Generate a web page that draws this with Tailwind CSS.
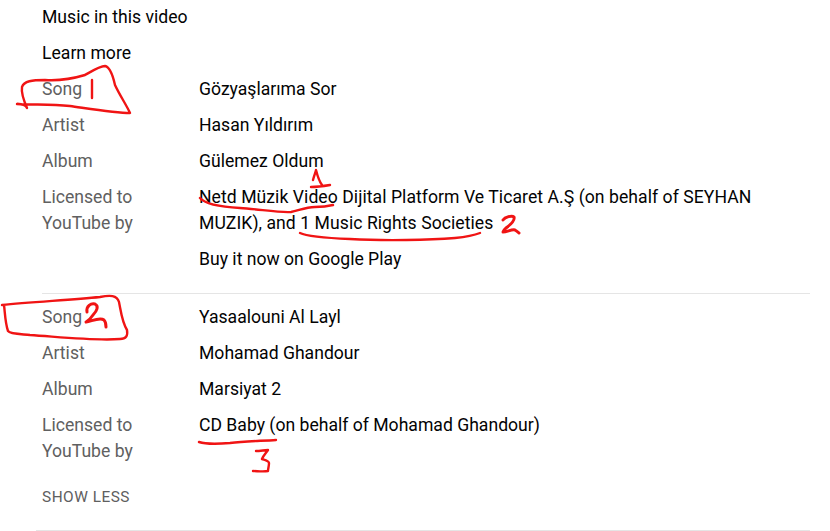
<!DOCTYPE html>
<html lang="tr">
<head>
    <meta charset="UTF-8">
    <title>Music in this video</title>
    <script src="https://cdn.jsdelivr.net/npm/@tailwindcss/browser@4"></script>
</head>
<body class="bg-white h-[531px] overflow-hidden relative font-['Roboto',sans-serif] text-[17.6px] leading-[26px] text-[#030303]">
    <div class="pl-[36px] pr-[20px] pt-[4px]">
        <div class="pl-[6px]">
            <div class="mb-[10px]">Music in this video</div>
            <div class="mb-[10px]">Learn more</div>

            <div class="border-b border-[#e5e5e5] pb-[21px] mb-[10px]">
                <div class="grid grid-cols-[157px_1fr] gap-y-[10px]">
                    <div class="text-[#606060]">Song</div><div>Gözyaşlarıma Sor</div>
                    <div class="text-[#606060]">Artist</div><div>Hasan Yıldırım</div>
                    <div class="text-[#606060]">Album</div><div>Gülemez Oldum</div>
                    <div class="text-[#606060]">Licensed to<br>YouTube by</div>
                    <div class="w-[570px] tracking-[0.05px]">Netd Müzik Video Dijital Platform Ve Ticaret A.Ş (on behalf of SEYHAN MUZIK), and 1 Music Rights Societies</div>
                    <div></div><div>Buy it now on Google Play</div>
                </div>
            </div>

            <div class="grid grid-cols-[157px_1fr] gap-y-[10px]">
                <div class="text-[#606060]">Song</div><div>Yasaalouni Al Layl</div>
                <div class="text-[#606060]">Artist</div><div>Mohamad Ghandour</div>
                <div class="text-[#606060]">Album</div><div>Marsiyat 2</div>
                <div class="text-[#606060]">Licensed to<br>YouTube by</div>
                <div>CD Baby (on behalf of Mohamad Ghandour)</div>
            </div>

            <div class="mt-[20px] text-[15.4px] leading-[26px] tracking-[0.5px] text-[#606060]">SHOW LESS</div>
        </div>
        <div class="mt-[20px] border-b border-[#e5e5e5]"></div>
    </div>

    <!-- red pen marks drawn over the screenshot -->
    <svg class="absolute inset-0 pointer-events-none" width="830" height="531" viewBox="0 0 830 531" fill="none" stroke="#f01414" stroke-width="2.4" stroke-linecap="round" stroke-linejoin="round">
        <path d="M17 104C22 104 26 105 27 108C24 101 21 93 22 87C24 81 32 80 45 80C60 81 75 78 85 75C92 71 100 66 105 66C110 67 113 76 115 85C119 94 127 106 130 113C115 113 85 108 70 106C50 104 35 105 17 104Z"/>
        <path d="M92 80V98"/>
        <path d="M2 305C30 302 70 300 100 297C110 295 117 295 119 302C121 312 122 322 127 330C128 336 126 339 120 339C95 341 60 337 30 335C20 334 10 334 8 331C5 322 5 312 4 305"/>
        <path stroke-width="3" d="M87 312C86 306 91 303 95 304C99 306 97 311 93 315C91 318 88 321 86 322C92 321 100 317 104 320C106 322 106 325 106 327"/>
        <path d="M200 198C205 204 222 207 240 208C258 209 280 213 291 212C298 211 305 207 315 207C322 207 329 206 333 205"/>
        <path d="M313 180C314 176 316 171 316 170C317 174 319 181 322 185M311 187C318 187 324 186 330 185"/>
        <path d="M300 233C306 236 325 238 350 239C385 241 430 240 455 238C465 237 475 235 480 233"/>
        <path stroke-width="3" d="M503 220C505 217 512 215 514 217C515 220 510 225 506 228C504 230 503 231 503 232C507 232 512 229 515 230C517 231 518 232 519 233"/>
        <path d="M199 442C205 444 218 444 230 443C245 441 262 441 276 440"/>
        <path d="M256 451C260 451 265 450 268 450C266 453 263 456 262 459C265 460 269 461 269 463C269 466 268 469 268 471C263 472 257 471 253 471"/>
    </svg>
</body>
</html>
